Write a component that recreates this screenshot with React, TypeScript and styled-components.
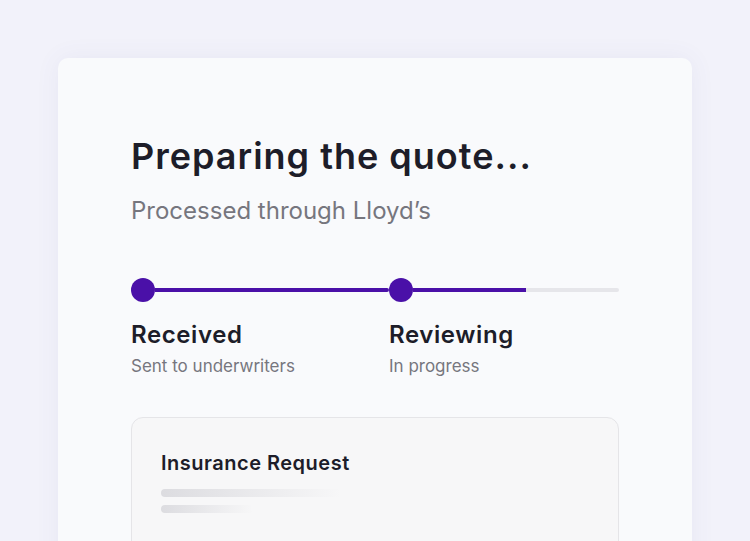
import React from 'react';
import styled, {createGlobalStyle} from 'styled-components';

const purple = '#4a10a8';
const ink = '#1d1d29';
const muted = '#76767e';

const GlobalStyle = createGlobalStyle`
    html, body {
        margin: 0;
        padding: 0;
        background: #f2f2fa;
        height: 541px;
        overflow: hidden;
    }
    body {
        font-family: Inter, "Noto Sans", sans-serif;
        -webkit-font-smoothing: antialiased;
    }
`;

const steps = [
    {title: 'Received', note: 'Sent to underwriters', fill: 100},
    {title: 'Reviewing', note: 'In progress', fill: 55},
];

const App = () => {
    return (
        <Page>
            <GlobalStyle />
            <Card>
                <Title>Preparing the quote...</Title>
                <Subtitle>Processed through Lloyd’s</Subtitle>
                <Steps>
                    {steps.map(step => (
                        <Step key={step.title}>
                            <Track>
                                <Dot />
                                <Line $fill={step.fill} />
                            </Track>
                            <StepTitle>{step.title}</StepTitle>
                            <StepNote>{step.note}</StepNote>
                        </Step>
                    ))}
                </Steps>
                <Request>
                    <RequestTitle>Insurance Request</RequestTitle>
                    <Skeleton $width={180} />
                    <Skeleton $width={92} />
                </Request>
            </Card>
        </Page>
    );
};

const Page = styled.div`
    height: 541px;
    padding: 58px 58px 0;
    box-sizing: border-box;
    overflow: hidden;
`;

const Card = styled.div`
    width: 634px;
    height: 520px;
    box-sizing: border-box;
    padding: 76px 73px 0;
    background: #f9fafc;
    border-radius: 10px;
    box-shadow: 0 0 24px rgba(90, 90, 160, 0.07);
`;

const Title = styled.h1`
    margin: 0;
    font-size: 36px;
    line-height: 44px;
    font-weight: 600;
    letter-spacing: 1px;
    color: ${ink};
`;

const Subtitle = styled.div`
    margin-top: 18px;
    font-size: 24px;
    line-height: 30px;
    color: ${muted};
`;

const Steps = styled.div`
    display: grid;
    grid-template-columns: 258px 1fr;
    margin-top: 52px;
`;

const Step = styled.div`
    display: flex;
    flex-direction: column;
`;

const Track = styled.div`
    display: flex;
    align-items: center;
    height: 24px;
`;

const Dot = styled.div`
    width: 24px;
    height: 24px;
    border-radius: 50%;
    background: ${purple};
    flex-shrink: 0;
`;

const Line = styled.div<{$fill: number}>`
    flex: 1;
    height: 4px;
    border-radius: 0 2px 2px 0;
    background: linear-gradient(
        to right,
        ${purple} 0,
        ${purple} ${p => p.$fill}%,
        #e6e6ea ${p => p.$fill}%,
        #e6e6ea 100%
    );
`;

const StepTitle = styled.div`
    margin-top: 18px;
    font-size: 24px;
    line-height: 30px;
    font-weight: 600;
    letter-spacing: 0.6px;
    color: ${ink};
`;

const StepNote = styled.div`
    margin-top: 5px;
    font-size: 17px;
    line-height: 22px;
    color: ${muted};
`;

const Request = styled.div`
    margin-top: 40px;
    height: 200px;
    padding: 32px 29px 0;
    background: #f7f7f8;
    border: 1px solid #e5e5e8;
    border-radius: 12px;
`;

const RequestTitle = styled.div`
    font-size: 20px;
    line-height: 26px;
    font-weight: 600;
    letter-spacing: 0.5px;
    color: ${ink};
    margin-bottom: 13px;
`;

const Skeleton = styled.div<{$width: number}>`
    width: ${p => p.$width}px;
    height: 8px;
    border-radius: 4px;
    margin-bottom: 8px;
    background: linear-gradient(to right, #dcdce0, rgba(225, 225, 230, 0));
`;

export default App;
